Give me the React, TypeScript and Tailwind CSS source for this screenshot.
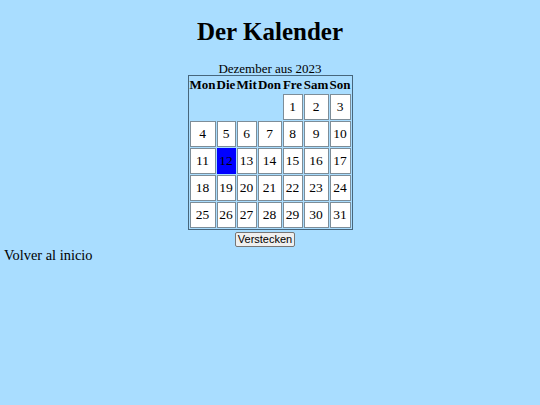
import React from 'react';

// Dezember 2023 starts on a Friday, so four empty cells lead the month
const dayNames = ['Mon', 'Die', 'Mit', 'Don', 'Fre', 'Sam', 'Son'];
const leadingBlanks = 4;
const daysInMonth = 31;
const today = 12;

const App: React.FC = () => {
  const cells: (number | null)[] = [
    ...Array.from({ length: leadingBlanks }, () => null),
    ...Array.from({ length: daysInMonth }, (_, i) => i + 1),
  ];

  return (
    <div className="min-h-[405px] w-full bg-[#a9ddff] text-black font-['Liberation_Serif','Times_New_Roman',serif]">
      <div className="flex flex-col items-center pt-[17px]">
        <h1 className="text-[25px] leading-[29px] font-bold">Der Kalender</h1>

        <div className="mt-[16px] pt-[1px] text-[13px] leading-[12px]">Dezember aus 2023</div>

        <div className="border border-[#47667c] p-[1px]">
          <div className="grid grid-cols-[26px_19px_20px_24px_20px_25px_21px] gap-[1px]">
            {dayNames.map((name) => (
              <div key={name} className="h-[16px] text-center text-[13px] leading-[16px] font-bold">
                {name}
              </div>
            ))}
            {cells.map((day, idx) =>
              day === null ? (
                <div key={`blank-${idx}`} className="h-[26px]" />
              ) : (
                <div
                  key={day}
                  className={
                    day === today
                      ? 'h-[26px] flex items-center justify-center border border-[#0000ff] bg-[#0000ff] text-[13.5px]'
                      : 'h-[26px] flex items-center justify-center border border-[#7d8d98] bg-white text-[13.5px]'
                  }
                >
                  {day}
                </div>
              )
            )}
          </div>
        </div>

        <button
          type="button"
          className="mt-[2px] mr-[10px] h-[15px] px-[2px] border border-[#767676] rounded-[2px] bg-[#efefef] text-[11px] leading-[13px] font-['Liberation_Sans',Arial,sans-serif]"
        >
          Verstecken
        </button>
      </div>

      <div className="pl-[4px] text-[14.4px] leading-[17px]">Volver al inicio</div>
    </div>
  );
};

export default App;
